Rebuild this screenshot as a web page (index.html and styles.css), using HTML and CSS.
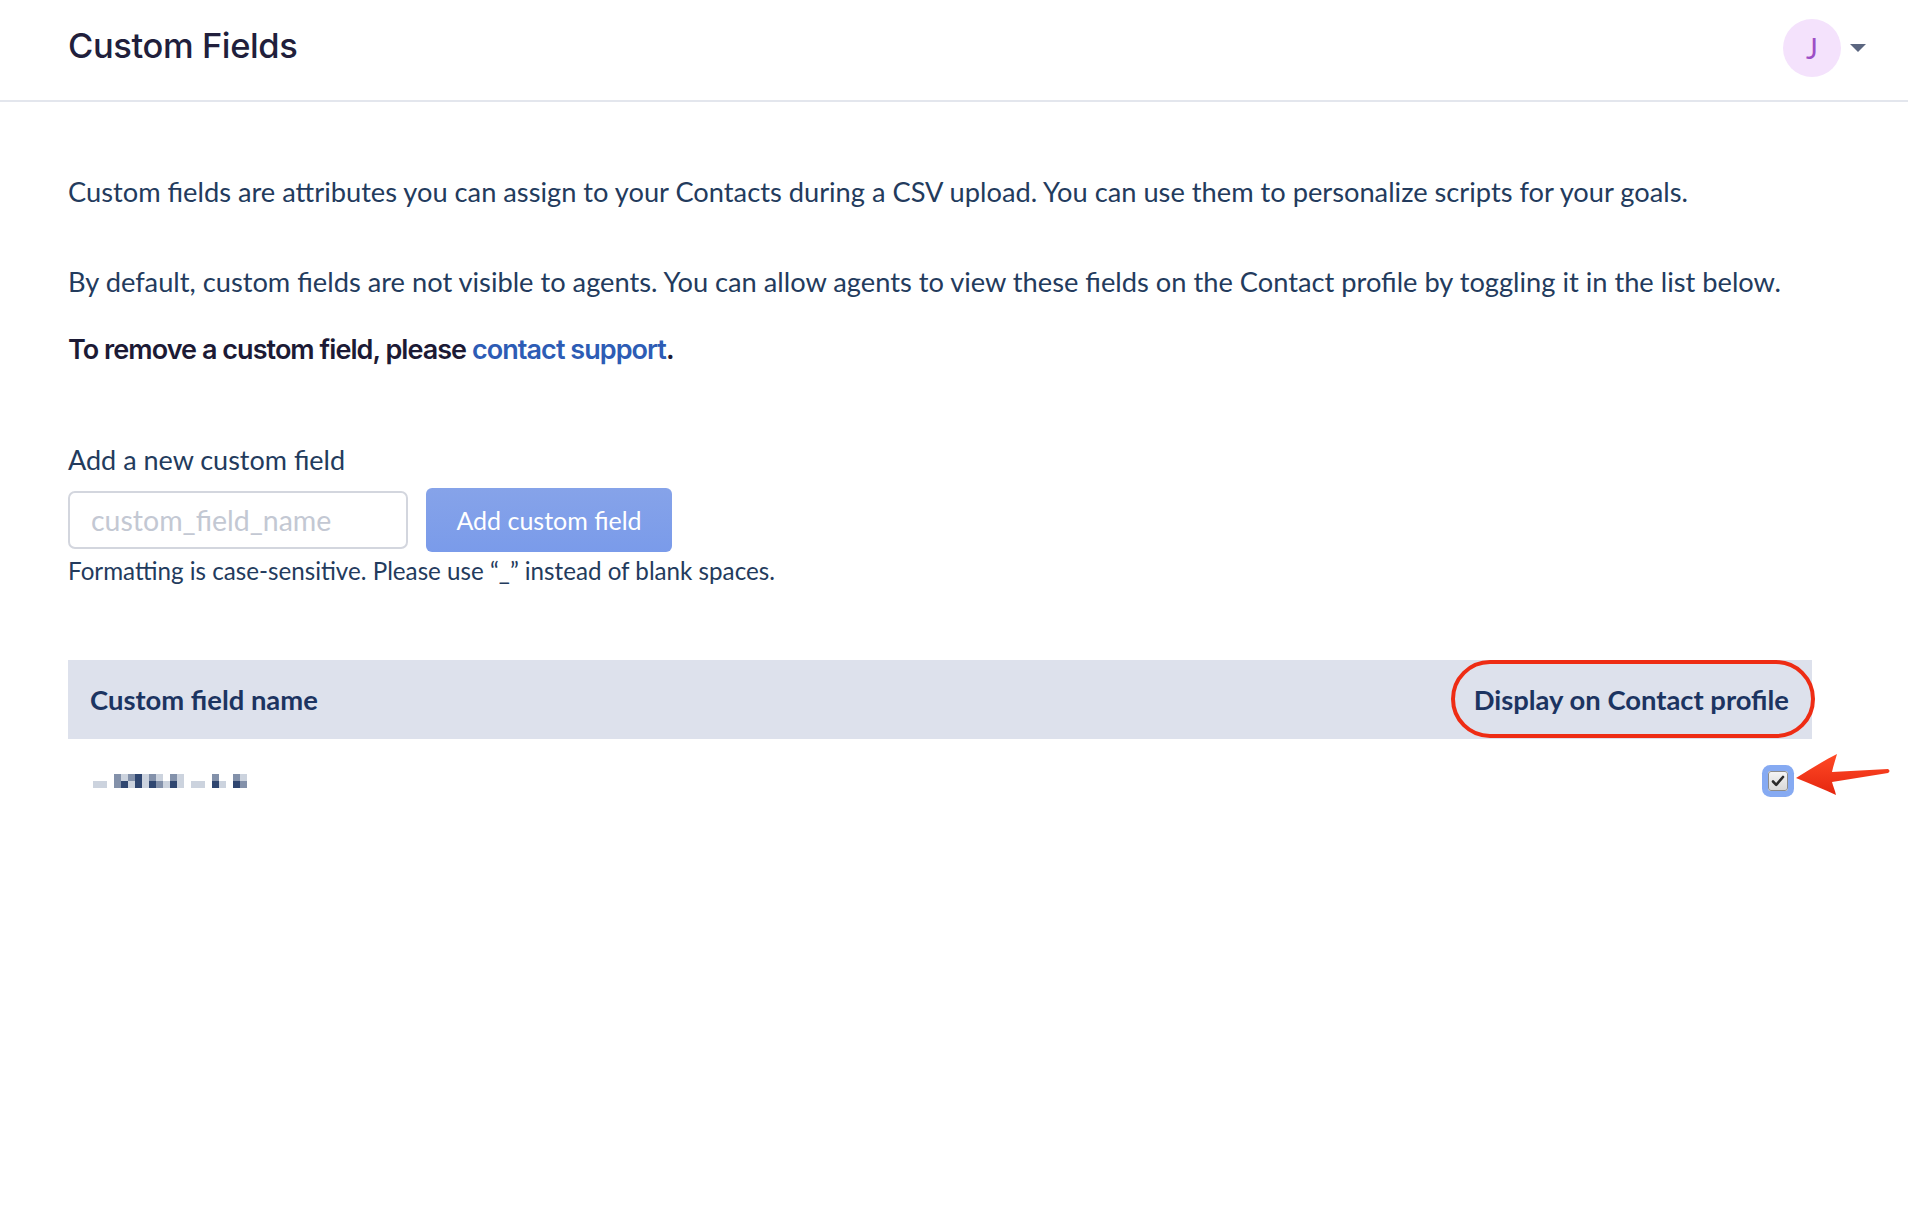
FILE: index.html
```html
<!DOCTYPE html>
<html>
<head>
    <meta charset="utf-8">
    <title>Custom Fields</title>
    <link rel="stylesheet" href="styles.css">
</head>
<body>
    <div class="topbar">
        <h1 class="page-title">Custom Fields</h1>
        <div class="user-menu">
            <div class="avatar">J</div>
            <span class="caret"></span>
        </div>
    </div>

    <div class="content">
        <p class="intro">Custom fields are attributes you can assign to your Contacts during a CSV upload. You can use them to personalize scripts for your goals.</p>
        <p class="intro second">By default, custom fields are not visible to agents. You can allow agents to view these fields on the Contact profile by toggling it in the list below.</p>
        <p class="remove-note">To remove a custom field, please <a href="#">contact support</a>.</p>

        <div class="add-field">
            <label class="add-label" for="fieldName">Add a new custom field</label>
            <div class="add-row">
                <input type="text" id="fieldName" placeholder="custom_field_name">
                <button class="add-btn">Add custom field</button>
            </div>
            <div class="hint">Formatting is case-sensitive. Please use “_” instead of blank spaces.</div>
        </div>

        <div class="fields-table">
            <div class="table-head">
                <div class="col-name">Custom field name</div>
                <div class="col-display">
                    Display on Contact profile
                    <span class="mark-oval"></span>
                </div>
            </div>
            <div class="table-row">
                <!-- redacted field name -->
                <div class="mosaic">
                    <div class="mrow">
                        <i class="s0"></i><i class="s0"></i><i class="s0"></i><i class="s2"></i><i class="s1"></i><i class="s2"></i><i class="s3"></i><i class="s1"></i><i class="s2"></i><i class="s1"></i><i class="s0"></i><i class="s2"></i><i class="s1"></i><i class="s0"></i><i class="s0"></i><i class="s0"></i><i class="s0"></i><i class="s2"></i><i class="s0"></i><i class="s0"></i><i class="s2"></i><i class="s1"></i>
                    </div>
                    <div class="mrow">
                        <i class="s1"></i><i class="s1"></i><i class="s0"></i><i class="s2"></i><i class="s3"></i><i class="s1"></i><i class="s3"></i><i class="s1"></i><i class="s3"></i><i class="s2"></i><i class="s1"></i><i class="s3"></i><i class="s1"></i><i class="s0"></i><i class="s1"></i><i class="s1"></i><i class="s0"></i><i class="s3"></i><i class="s1"></i><i class="s0"></i><i class="s3"></i><i class="s2"></i>
                    </div>
                </div>
                <div class="check-wrap">
                    <span class="fake-check">
                        <svg width="14" height="14" viewBox="0 0 14 14"><path d="M2 7.5 L5.2 10.8 L12 3" fill="none" stroke="#2a2a2a" stroke-width="2.6" stroke-linecap="round" stroke-linejoin="round"/></svg>
                    </span>
                    <svg class="mark-arrow" width="96" height="46" viewBox="0 0 96 46">
                        <defs>
                            <linearGradient id="arrowFill" x1="0" y1="0" x2="0" y2="1">
                                <stop offset="0" stop-color="#ff4a26"/>
                                <stop offset="1" stop-color="#e5260f"/>
                            </linearGradient>
                        </defs>
                        <path d="M1 27 C14 19 28 10 42 3 C40 10 38 16 37 21 L93 18 Q96 20 93 22 L37 31 C38 35 40 39 41 44 C28 38 14 32 1 27 Z" fill="url(#arrowFill)"/>
                    </svg>
                </div>
            </div>
        </div>
    </div>
</body>
</html>
```

FILE: styles.css
```css
body {
    margin: 0;
    font-family: Lato, "Open Sans", sans-serif;
    background-color: #fff;
    color: #233b5d;
}

.topbar {
    height: 100px;
    display: flex;
    justify-content: space-between;
    align-items: center;
    padding: 0 42px 0 68px;
    border-bottom: 2px solid #e3e6ed;
}

.page-title {
    margin: 0 0 10px;
    font-family: Inter, sans-serif;
    font-size: 34.5px;
    font-weight: 500;
    letter-spacing: -0.4px;
    color: #211f3c;
}

.user-menu {
    display: flex;
    align-items: center;
    gap: 9px;
    margin-bottom: 5px;
}

.avatar {
    width: 58px;
    height: 58px;
    border-radius: 50%;
    background: #f4e2fc;
    color: #9d4fc6;
    font-size: 28px;
    display: flex;
    align-items: center;
    justify-content: center;
}

.caret {
    width: 0;
    height: 0;
    border-left: 8px solid transparent;
    border-right: 8px solid transparent;
    border-top: 8px solid #5b6680;
}

.content {
    padding: 72px 96px 0 68px;
}

.intro {
    margin: 0 0 54px;
    font-size: 27.25px;
    line-height: 36px;
}

.intro.second {
    margin-bottom: 32px;
}

.remove-note {
    margin: 0;
    font-family: Inter, sans-serif;
    font-size: 27px;
    font-weight: 600;
    letter-spacing: -0.95px;
    line-height: 36px;
    color: #1c1a35;
}

.remove-note a {
    color: #2d5cb5;
    text-decoration: none;
}

.add-field {
    margin-top: 74px;
}

.add-label {
    display: block;
    font-size: 27px;
    line-height: 36px;
    margin-bottom: 10px;
}

.add-row {
    display: flex;
    align-items: center;
    gap: 18px;
}

.add-row input {
    width: 340px;
    height: 58px;
    box-sizing: border-box;
    padding: 0 21px;
    border: 2px solid #d3d6de;
    border-radius: 7px;
    font-family: Lato, sans-serif;
    font-size: 28.5px;
    color: #233b5d;
}

.add-row input::placeholder {
    color: #c3c8d3;
}

.add-btn {
    width: 246px;
    height: 64px;
    border: none;
    border-radius: 6px;
    background: linear-gradient(#86a3e9, #7a9bea);
    color: #fff;
    font-family: Lato, sans-serif;
    font-size: 25px;
    cursor: pointer;
}

.hint {
    margin-top: 4px;
    font-size: 24.2px;
    line-height: 30px;
}

.fields-table {
    margin-top: 74px;
}

.table-head {
    display: flex;
    justify-content: space-between;
    height: 79px;
    line-height: 80px;
    padding: 0 23px 0 22px;
    background: #dde1ec;
    font-size: 27.4px;
    font-weight: 700;
    color: #1c3461;
}

.col-display {
    position: relative;
}

.mark-oval {
    position: absolute;
    top: 0;
    bottom: 1px;
    right: -26px;
    left: -23px;
    border: 4px solid #ee2c14;
    border-radius: 40px;
}

.table-row {
    display: flex;
    justify-content: space-between;
    align-items: center;
    height: 84px;
    padding: 0 24px 0 25px;
}

.mosaic {
    display: flex;
    flex-direction: column;
}

.mrow {
    display: flex;
}

.mrow i {
    width: 7px;
    height: 7px;
}

.s0 { background: transparent; }
.s1 { background: #ccd3de; }
.s2 { background: #8391aa; }
.s3 { background: #2f4670; }

.check-wrap {
    position: relative;
}

.fake-check {
    display: flex;
    align-items: center;
    justify-content: center;
    width: 18px;
    height: 18px;
    border: 1px solid #8c8c8c;
    border-radius: 3px;
    background: linear-gradient(#f4f4f4, #d8d8d8);
    box-shadow: 0 0 0 6px #86aaf2;
}

.mark-arrow {
    position: absolute;
    left: 27px;
    top: -20px;
}
```
